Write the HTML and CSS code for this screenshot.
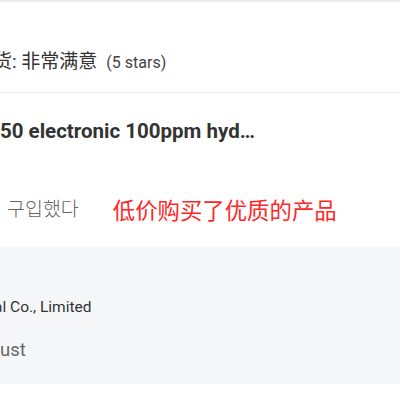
FILE: index.html
```html
<!DOCTYPE html>
<html lang="zh">
<head>
<meta charset="utf-8">
<link rel="stylesheet" href="styles.css">
</head>
<body>
<div class="page">
  <section class="rating">
    <span class="rating-label">货: </span><span class="rating-value">非常满意</span><span class="rating-stars">(5 stars)</span>
  </section>
  <section class="review">
    <div class="product-title">50 electronic 100ppm hyd…</div>
    <div class="comment">
      <span class="comment-ko" lang="ko">구입했다</span>
      <span class="comment-zh">低价购买了优质的产品</span>
    </div>
  </section>
  <section class="seller">
    <div class="seller-name">al Co., Limited</div>
    <div class="seller-tag">ust</div>
  </section>
</div>
</body>
</html>
```

FILE: styles.css
```css
html, body {
  margin: 0;
  padding: 0;
  background: #ffffff;
}
body {
  font-family: Roboto, "Noto Sans CJK SC", sans-serif;
  color: #333333;
  border-top: 2px solid #ebebeb;
  overflow: hidden;
}
.page {
  width: 400px;
}
.rating {
  padding: 48px 0 18px 0;
  height: 24px;
  line-height: 24px;
  border-bottom: 1px solid #e8e8e8;
  white-space: nowrap;
}
.rating-label {
  font-size: 19px;
  margin-left: -7px;
}
.rating-value {
  font-size: 19px;
}
.rating-stars {
  font-size: 16px;
  margin-left: 9px;
  color: #444444;
}
.review {
  padding: 25px 0 23px 0;
}
.product-title {
  font-size: 20.5px;
  font-weight: 700;
  line-height: 26px;
  white-space: nowrap;
}
.comment {
  margin-top: 50px;
  display: flex;
  align-items: center;
  height: 30px;
  white-space: nowrap;
}
.comment-ko {
  font-family: Roboto, "Noto Sans CJK KR", sans-serif;
  font-size: 19.5px;
  font-weight: 300;
  color: #666666;
  margin-left: 7px;
  margin-top: -3px;
}
.comment-zh {
  font-family: "Noto Sans CJK SC", sans-serif;
  font-size: 22.4px;
  color: #ff2626;
  margin-left: 34px;
}
.seller {
  background: #f6f7f9;
  padding: 50px 0 21px 0;
  height: 66px;
}
.seller-name {
  font-size: 15.5px;
  line-height: 20px;
  margin-left: -6px;
  white-space: nowrap;
}
.seller-tag {
  margin-top: 20px;
  font-size: 18.5px;
  line-height: 26px;
  color: #666666;
}
```
